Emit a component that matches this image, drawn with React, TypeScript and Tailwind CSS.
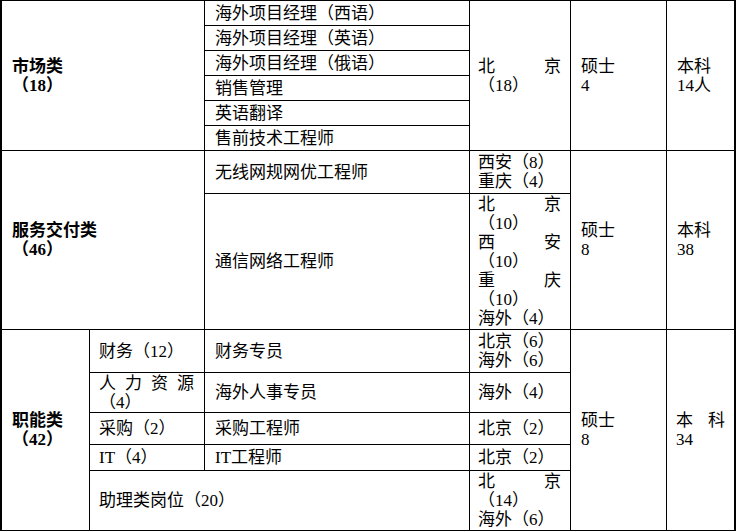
const cell = "bg-white flex flex-col justify-center px-[9px]";

function Spread({ chars }: { chars: string[] }) {
  return (
    <div className="flex justify-between">
      {chars.map((c) => (
        <span key={c}>{c}</span>
      ))}
    </div>
  );
}

export default function App() {
  return (
    <div className="bg-white min-h-[531px] font-['Liberation_Serif','Noto_Sans_CJK_SC',serif] text-[17px] leading-[19px] text-black">
      <div className="inline-grid grid-cols-[87px_114px_264px_100px_95px_67px] grid-rows-[24px_24px_24px_24px_24px_24px_42px_135px_42px_39px_31px_25px_59px] gap-px bg-black px-[2px] py-px">
        {/* 市场类 */}
        <div className={`${cell} col-start-1 col-span-2 row-start-1 row-span-6 pl-[10px] font-bold`}>
          <div>市场类</div>
          <div>（18）</div>
        </div>
        <div className={`${cell} col-start-3 row-start-1 pl-[10px]`}>海外项目经理（西语）</div>
        <div className={`${cell} col-start-3 row-start-2 pl-[10px]`}>海外项目经理（英语）</div>
        <div className={`${cell} col-start-3 row-start-3 pl-[10px]`}>海外项目经理（俄语）</div>
        <div className={`${cell} col-start-3 row-start-4 pl-[10px]`}>销售管理</div>
        <div className={`${cell} col-start-3 row-start-5 pl-[10px]`}>英语翻译</div>
        <div className={`${cell} col-start-3 row-start-6 pl-[10px]`}>售前技术工程师</div>
        <div className={`${cell} col-start-4 row-start-1 row-span-6 pl-[8px] pr-[9px]`}>
          <Spread chars={["北", "京"]} />
          <div>（18）</div>
        </div>
        <div className={`${cell} col-start-5 row-start-1 row-span-6 pl-[10px]`}>
          <div>硕士</div>
          <div>4</div>
        </div>
        <div className={`${cell} col-start-6 row-start-1 row-span-6 pl-[10px]`}>
          <div>本科</div>
          <div>14人</div>
        </div>

        {/* 服务交付类 */}
        <div className={`${cell} col-start-1 col-span-2 row-start-7 row-span-2 pl-[10px] font-bold`}>
          <div>服务交付类</div>
          <div>（46）</div>
        </div>
        <div className={`${cell} col-start-3 row-start-7 pl-[10px]`}>无线网规网优工程师</div>
        <div className={`${cell} col-start-3 row-start-8 pl-[10px]`}>通信网络工程师</div>
        <div className={`${cell} col-start-4 row-start-7 pl-[8px]`}>
          <div>西安（8）</div>
          <div>重庆（4）</div>
        </div>
        <div className={`${cell} col-start-4 row-start-8 pl-[8px] pr-[9px]`}>
          <Spread chars={["北", "京"]} />
          <div>（10）</div>
          <Spread chars={["西", "安"]} />
          <div>（10）</div>
          <Spread chars={["重", "庆"]} />
          <div>（10）</div>
          <div>海外（4）</div>
        </div>
        <div className={`${cell} col-start-5 row-start-7 row-span-2 pl-[10px]`}>
          <div>硕士</div>
          <div>8</div>
        </div>
        <div className={`${cell} col-start-6 row-start-7 row-span-2 pl-[10px]`}>
          <div>本科</div>
          <div>38</div>
        </div>

        {/* 职能类 */}
        <div className={`${cell} col-start-1 row-start-9 row-span-5 pl-[10px] font-bold`}>
          <div>职能类</div>
          <div>（42）</div>
        </div>
        <div className={`${cell} col-start-2 row-start-9`}>财务（12）</div>
        <div className={`${cell} col-start-3 row-start-9 pl-[10px]`}>财务专员</div>
        <div className={`${cell} col-start-4 row-start-9 pl-[8px]`}>
          <div>北京（6）</div>
          <div>海外（6）</div>
        </div>
        <div className={`${cell} col-start-2 row-start-10 pr-[10px]`}>
          <Spread chars={["人", "力", "资", "源"]} />
          <div>（4）</div>
        </div>
        <div className={`${cell} col-start-3 row-start-10 pl-[10px]`}>海外人事专员</div>
        <div className={`${cell} col-start-4 row-start-10 pl-[8px]`}>海外（4）</div>
        <div className={`${cell} col-start-2 row-start-11`}>采购（2）</div>
        <div className={`${cell} col-start-3 row-start-11 pl-[10px]`}>采购工程师</div>
        <div className={`${cell} col-start-4 row-start-11 pl-[8px]`}>北京（2）</div>
        <div className={`${cell} col-start-2 row-start-12`}>IT（4）</div>
        <div className={`${cell} col-start-3 row-start-12 pl-[10px]`}>IT工程师</div>
        <div className={`${cell} col-start-4 row-start-12 pl-[8px]`}>北京（2）</div>
        <div className={`${cell} col-start-2 col-span-2 row-start-13`}>助理类岗位（20）</div>
        <div className={`${cell} col-start-4 row-start-13 pl-[8px] pr-[9px]`}>
          <Spread chars={["北", "京"]} />
          <div>（14）</div>
          <div>海外（6）</div>
        </div>
        <div className={`${cell} col-start-5 row-start-9 row-span-5 pl-[10px]`}>
          <div>硕士</div>
          <div>8</div>
        </div>
        <div className={`${cell} col-start-6 row-start-9 row-span-5`}>
          <Spread chars={["本", "科"]} />
          <div>34</div>
        </div>
      </div>
    </div>
  );
}
